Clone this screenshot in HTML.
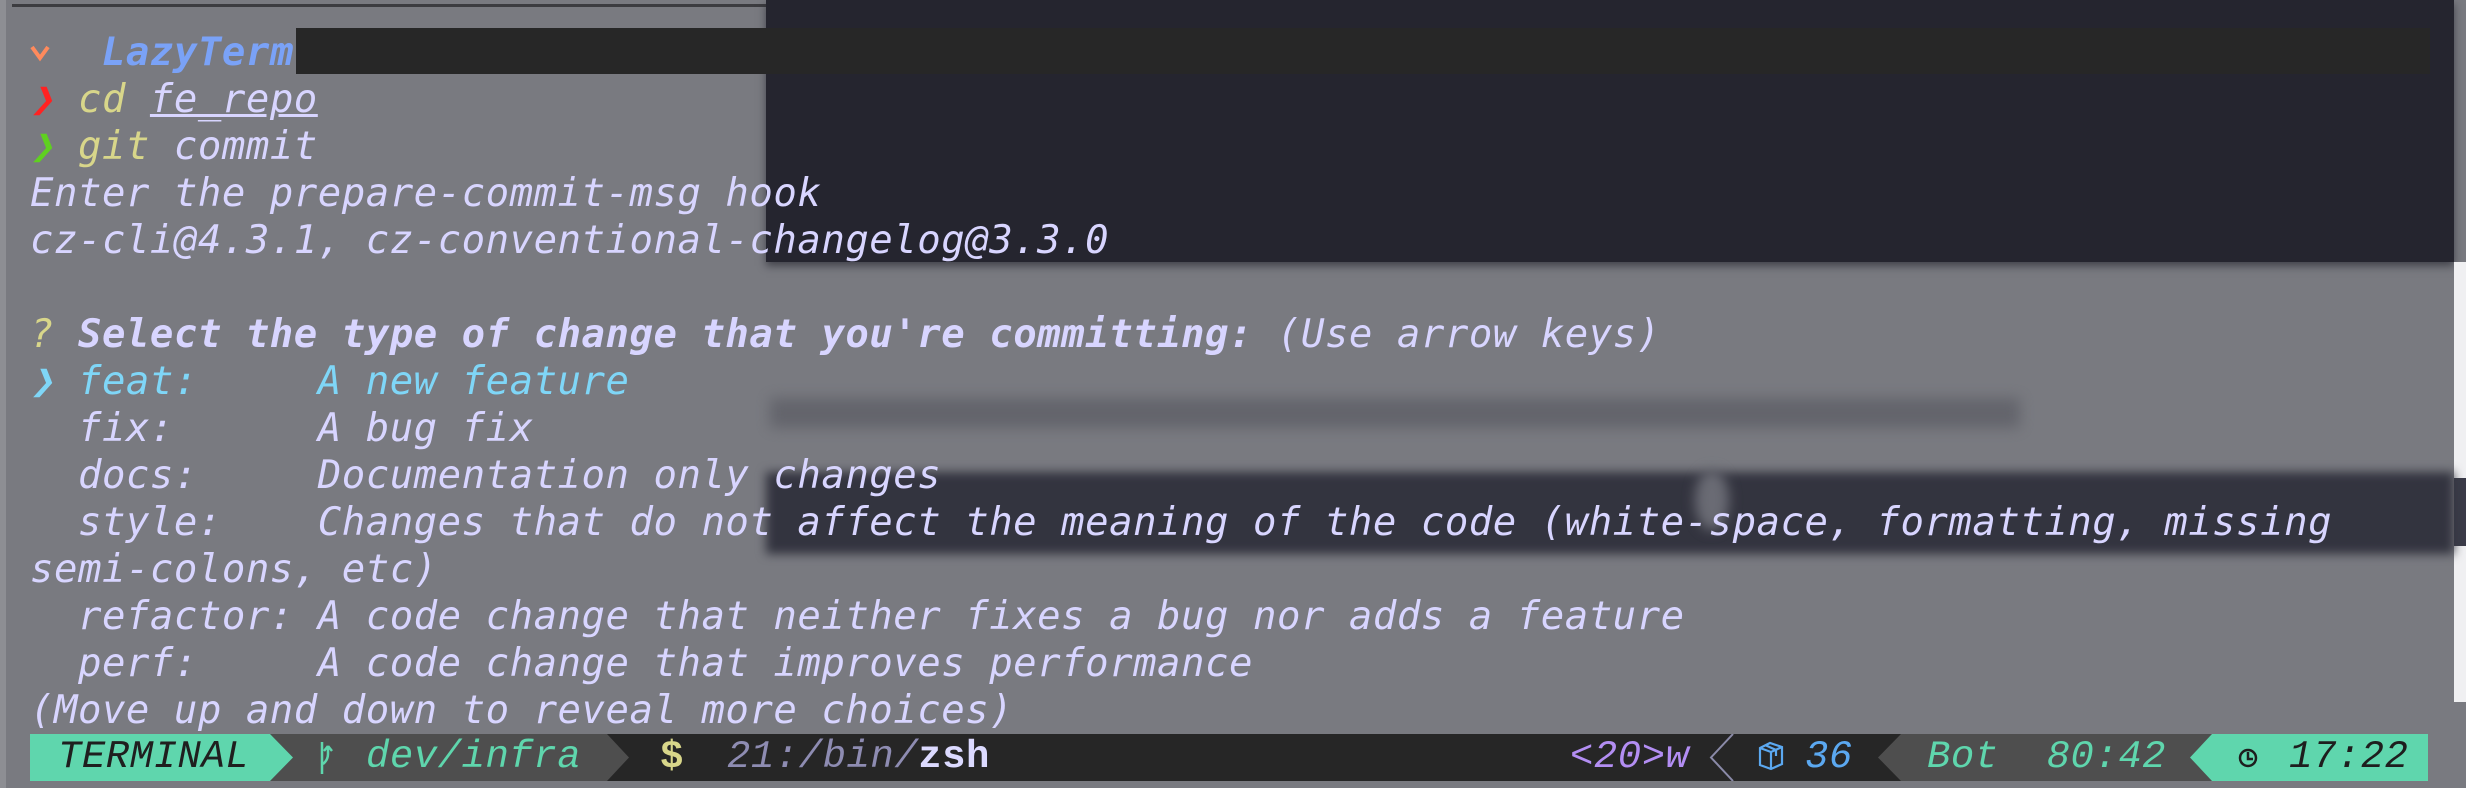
<!DOCTYPE html>
<html><head><meta charset="utf-8"><style>
html,body{margin:0;padding:0;}
body{width:2466px;height:788px;position:relative;overflow:hidden;background:#797a80;font-family:"Liberation Mono","DejaVu Sans Mono",monospace;}
.abs{position:absolute;}
.term{position:absolute;left:30px;top:29px;margin:0;font-size:39px;line-height:47px;font-style:italic;color:#d8d5ff;white-space:pre;letter-spacing:0.5px;}
.b{font-weight:bold;}
.sb{position:absolute;top:734px;height:47px;font-size:39px;line-height:47px;font-style:italic;white-space:pre;letter-spacing:0.5px;}
</style></head><body>
<div class="abs" style="left:0;top:0;width:6px;height:788px;background:#8d8e93"></div>
<div class="abs" style="left:12px;top:4px;width:760px;height:3px;background:#3c3c40"></div>
<!-- background window -->
<div class="abs" style="left:766px;top:0;width:1688px;height:262px;background:#25252f;box-shadow:0 4px 8px rgba(30,30,40,.6)"></div>
<div class="abs" style="left:2454px;top:262px;width:12px;height:440px;background:#f0f0f2"></div>
<div class="abs" style="left:2454px;top:478px;width:12px;height:68px;background:#3a3b48"></div>
<div class="abs" style="left:770px;top:398px;width:1250px;height:30px;background:#5e5f67;filter:blur(7px);opacity:.8"></div>
<div class="abs" style="left:766px;top:472px;width:1688px;height:82px;background:#33343f;filter:blur(5px)"></div>
<div class="abs" style="left:1695px;top:470px;width:34px;height:60px;border-radius:50%;background:#6a6b74;filter:blur(6px)"></div>
<div class="abs" style="left:296px;top:28px;width:2134px;height:46px;background:#272727"></div>
<svg class="abs" style="left:28px;top:40px" width="24" height="24"><path d="M4 7 L12 18 L20 7" fill="none" stroke="#ff8a5c" stroke-width="4"/></svg>
<pre class="term">   <span class="b" style="color:#7aa2f7">LazyTerm</span>
<span style="color:#ff2222">❯</span> <span style="color:#d8d68a">cd</span> <span style="text-decoration:underline">fe_repo</span>
<span style="color:#5fd020">❯</span> <span style="color:#d8d68a">git</span> commit
Enter the prepare-commit-msg hook
cz-cli@4.3.1, cz-conventional-changelog@3.3.0

<span style="color:#d8d68a">?</span> <span class="b">Select the type of change that you're committing:</span> (Use arrow keys)
<span style="color:#7fd6f7">❯ feat:     A new feature</span>
  fix:      A bug fix
  docs:     Documentation only changes
  style:    Changes that do not affect the meaning of the code (white-space, formatting, missing
semi-colons, etc)
  refactor: A code change that neither fixes a bug nor adds a feature
  perf:     A code change that improves performance
(Move up and down to reveal more choices)</pre>
<!-- status bar -->
<svg class="abs" style="left:0;top:734px" width="2466" height="47">
<rect x="30" y="0" width="2398" height="47" fill="#262626"/>
<polygon points="30,0 607,0 629,23.5 607,47 30,47" fill="#4e4e4e"/>
<polygon points="30,0 270,0 293,23.5 270,47 30,47" fill="#5fd6ad"/>
<polygon points="1901,0 2212,0 2212,47 1901,47 1878,23.5" fill="#4e4e4e"/>
<polygon points="2212,0 2428,0 2428,47 2212,47 2190,23.5" fill="#5fd6ad"/>
<polyline points="1733,0 1711,23.5 1733,47" fill="none" stroke="#8a8aa8" stroke-width="2"/>
<g stroke="#5ba8f0" stroke-width="2.2" fill="none"><path d="M1760 14 L1770 9 L1782 13 L1782 30 L1771 35 L1760 31 Z M1760 14 L1771 18 L1782 13 M1771 18 L1771 35 M1765 11 L1776 16 L1776 22"/></g>
<g stroke="#5fd6ad" stroke-width="2.5" fill="none"><path d="M322 8 L322 40 M328 12 L328 20 Q328 26 323 30 M328 12 l-4 5 M328 12 l4 5"/></g>
<g stroke="#1e1e1e" stroke-width="2.5" fill="none"><circle cx="2248" cy="24" r="8"/><path d="M2248 18 L2248 25 L2253 25"/></g>
</svg>
<div class="sb" style="left:58px;color:#1f1f1f">TERMINAL</div>
<div class="sb" style="left:366px;color:#5fd6ad">dev/infra</div>
<div class="sb b" style="left:660px;color:#d8d68a;font-style:normal">$</div>
<div class="sb" style="left:727px;color:#8e8cb2">21:/bin/<span class="b" style="color:#dcdaff;font-style:normal">zsh</span></div>
<div class="sb" style="left:1570px;color:#b38ef3">&lt;20&gt;w</div>
<div class="sb" style="left:1805px;color:#5ba8f0">36</div>
<div class="sb" style="left:1927px;color:#5fd6ad">Bot  80:42</div>
<div class="sb" style="left:2289px;color:#1e1e1e">17:22</div>
</body></html>
